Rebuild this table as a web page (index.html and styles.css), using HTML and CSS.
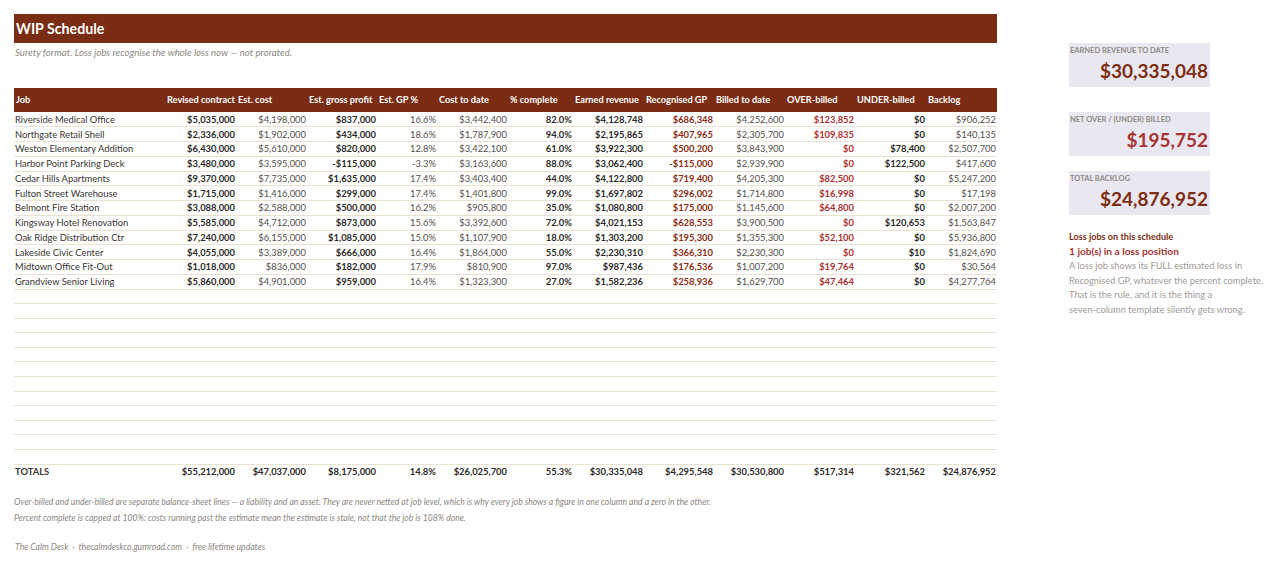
FILE: index.html
```html
<!DOCTYPE html>
<html lang="en">
<head>
<meta charset="utf-8">
<title>WIP Schedule</title>
<link rel="stylesheet" href="styles.css">
</head>
<body>
<div class="page">
  <main class="main">
    <header class="titlebar"><h1>WIP Schedule</h1></header>
    <p class="subtitle">Surety format. Loss jobs recognise the whole loss now — not prorated.</p>

    <table class="wip">
      <colgroup>
        <col class="c-job"><col class="c71"><col class="c71"><col class="c70"><col class="c60"><col class="c71"><col class="c65"><col class="c71"><col class="c70"><col class="c71"><col class="c70"><col class="c71"><col class="c71">
      </colgroup>
      <thead>
        <tr>
          <th>Job</th><th>Revised contract</th><th>Est. cost</th><th>Est. gross profit</th><th>Est. GP %</th><th>Cost to date</th><th>% complete</th><th>Earned revenue</th><th>Recognised GP</th><th>Billed to date</th><th>OVER-billed</th><th>UNDER-billed</th><th>Backlog</th>
        </tr>
      </thead>
      <tbody>
        <tr><td>Riverside Medical Office</td><td class="b">$5,035,000</td><td>$4,198,000</td><td class="b">$837,000</td><td>16.6%</td><td>$3,442,400</td><td class="b">82.0%</td><td class="b">$4,128,748</td><td class="gp">$686,348</td><td>$4,252,600</td><td class="ov">$123,852</td><td class="b">$0</td><td>$906,252</td></tr>
        <tr><td>Northgate Retail Shell</td><td class="b">$2,336,000</td><td>$1,902,000</td><td class="b">$434,000</td><td>18.6%</td><td>$1,787,900</td><td class="b">94.0%</td><td class="b">$2,195,865</td><td class="gp">$407,965</td><td>$2,305,700</td><td class="ov">$109,835</td><td class="b">$0</td><td>$140,135</td></tr>
        <tr><td>Weston Elementary Addition</td><td class="b">$6,430,000</td><td>$5,610,000</td><td class="b">$820,000</td><td>12.8%</td><td>$3,422,100</td><td class="b">61.0%</td><td class="b">$3,922,300</td><td class="gp">$500,200</td><td>$3,843,900</td><td class="ov">$0</td><td class="b">$78,400</td><td>$2,507,700</td></tr>
        <tr><td>Harbor Point Parking Deck</td><td class="b">$3,480,000</td><td>$3,595,000</td><td class="b">-$115,000</td><td>-3.3%</td><td>$3,163,600</td><td class="b">88.0%</td><td class="b">$3,062,400</td><td class="gp">-$115,000</td><td>$2,939,900</td><td class="ov">$0</td><td class="b">$122,500</td><td>$417,600</td></tr>
        <tr><td>Cedar Hills Apartments</td><td class="b">$9,370,000</td><td>$7,735,000</td><td class="b">$1,635,000</td><td>17.4%</td><td>$3,403,400</td><td class="b">44.0%</td><td class="b">$4,122,800</td><td class="gp">$719,400</td><td>$4,205,300</td><td class="ov">$82,500</td><td class="b">$0</td><td>$5,247,200</td></tr>
        <tr><td>Fulton Street Warehouse</td><td class="b">$1,715,000</td><td>$1,416,000</td><td class="b">$299,000</td><td>17.4%</td><td>$1,401,800</td><td class="b">99.0%</td><td class="b">$1,697,802</td><td class="gp">$296,002</td><td>$1,714,800</td><td class="ov">$16,998</td><td class="b">$0</td><td>$17,198</td></tr>
        <tr><td>Belmont Fire Station</td><td class="b">$3,088,000</td><td>$2,588,000</td><td class="b">$500,000</td><td>16.2%</td><td>$905,800</td><td class="b">35.0%</td><td class="b">$1,080,800</td><td class="gp">$175,000</td><td>$1,145,600</td><td class="ov">$64,800</td><td class="b">$0</td><td>$2,007,200</td></tr>
        <tr><td>Kingsway Hotel Renovation</td><td class="b">$5,585,000</td><td>$4,712,000</td><td class="b">$873,000</td><td>15.6%</td><td>$3,392,600</td><td class="b">72.0%</td><td class="b">$4,021,153</td><td class="gp">$628,553</td><td>$3,900,500</td><td class="ov">$0</td><td class="b">$120,653</td><td>$1,563,847</td></tr>
        <tr><td>Oak Ridge Distribution Ctr</td><td class="b">$7,240,000</td><td>$6,155,000</td><td class="b">$1,085,000</td><td>15.0%</td><td>$1,107,900</td><td class="b">18.0%</td><td class="b">$1,303,200</td><td class="gp">$195,300</td><td>$1,355,300</td><td class="ov">$52,100</td><td class="b">$0</td><td>$5,936,800</td></tr>
        <tr><td>Lakeside Civic Center</td><td class="b">$4,055,000</td><td>$3,389,000</td><td class="b">$666,000</td><td>16.4%</td><td>$1,864,000</td><td class="b">55.0%</td><td class="b">$2,230,310</td><td class="gp">$366,310</td><td>$2,230,300</td><td class="ov">$0</td><td class="b">$10</td><td>$1,824,690</td></tr>
        <tr><td>Midtown Office Fit-Out</td><td class="b">$1,018,000</td><td>$836,000</td><td class="b">$182,000</td><td>17.9%</td><td>$810,900</td><td class="b">97.0%</td><td class="b">$987,436</td><td class="gp">$176,536</td><td>$1,007,200</td><td class="ov">$19,764</td><td class="b">$0</td><td>$30,564</td></tr>
        <tr><td>Grandview Senior Living</td><td class="b">$5,860,000</td><td>$4,901,000</td><td class="b">$959,000</td><td>16.4%</td><td>$1,323,300</td><td class="b">27.0%</td><td class="b">$1,582,236</td><td class="gp">$258,936</td><td>$1,629,700</td><td class="ov">$47,464</td><td class="b">$0</td><td>$4,277,764</td></tr>
        <tr class="empty"><td colspan="13"></td></tr>
        <tr class="empty"><td colspan="13"></td></tr>
        <tr class="empty"><td colspan="13"></td></tr>
        <tr class="empty"><td colspan="13"></td></tr>
        <tr class="empty"><td colspan="13"></td></tr>
        <tr class="empty"><td colspan="13"></td></tr>
        <tr class="empty"><td colspan="13"></td></tr>
        <tr class="empty"><td colspan="13"></td></tr>
        <tr class="empty"><td colspan="13"></td></tr>
        <tr class="empty"><td colspan="13"></td></tr>
        <tr class="empty"><td colspan="13"></td></tr>
        <tr class="empty"><td colspan="13"></td></tr>
      </tbody>
      <tfoot>
        <tr><td>TOTALS</td><td>$55,212,000</td><td>$47,037,000</td><td>$8,175,000</td><td>14.8%</td><td>$26,025,700</td><td>55.3%</td><td>$30,335,048</td><td>$4,295,548</td><td>$30,530,800</td><td>$517,314</td><td>$321,562</td><td>$24,876,952</td></tr>
      </tfoot>
    </table>

    <div class="notes">
      <p>Over-billed and under-billed are separate balance-sheet lines — a liability and an asset. They are never netted at job level, which is why every job shows a figure in one column and a zero in the other.</p>
      <p>Percent complete is capped at 100%: costs running past the estimate mean the estimate is stale, not that the job is 108% done.</p>
    </div>
    <p class="footer">The Calm Desk &nbsp;·&nbsp; thecalmdeskco.gumroad.com &nbsp;·&nbsp; free lifetime updates</p>
  </main>

  <aside class="side">
    <div class="kpi kpi-1">
      <div class="kpi-label">EARNED REVENUE TO DATE</div>
      <div class="kpi-value">$30,335,048</div>
    </div>
    <div class="kpi kpi-2">
      <div class="kpi-label">NET OVER / (UNDER) BILLED</div>
      <div class="kpi-value red">$195,752</div>
    </div>
    <div class="kpi kpi-3">
      <div class="kpi-label">TOTAL BACKLOG</div>
      <div class="kpi-value">$24,876,952</div>
    </div>
    <div class="loss">
      <div class="loss-title">Loss jobs on this schedule</div>
      <div class="loss-count">1 job(s) in a loss position</div>
      <p class="loss-text">A loss job shows its FULL estimated loss in Recognised GP, whatever the percent complete. That is the rule, and it is the thing a <span class="nowrap">seven-column</span> template silently gets wrong.</p>
    </div>
  </aside>
</div>
</body>
</html>
```

FILE: styles.css
```css
* { box-sizing: border-box; }
html, body { margin: 0; padding: 0; background: #ffffff; }
body {
  font-family: Lato, "Open Sans", "Liberation Sans", sans-serif;
  color: #2d2a28;
}
.page {
  display: flex;
  align-items: flex-start;
  padding: 14px 0 0 14px;
}
.main { width: 983px; }

.titlebar {
  background: #7b2d13;
  height: 29px;
  display: flex;
  align-items: center;
  padding-left: 2px;
}
.titlebar h1 {
  margin: 0;
  color: #ffffff;
  font-size: 14.2px;
  font-weight: 700;
}
.subtitle {
  margin: 3px 0 0 1px;
  font-size: 9.7px;
  font-style: italic;
  color: #8c8782;
  line-height: 12px;
}

.wip {
  margin-top: 30px;
  width: 983px;
  table-layout: fixed;
  border-collapse: collapse;
  font-size: 9.4px;
}
.c-job { width: 151px; }
.c71 { width: 71px; }
.c70 { width: 70px; }
.c65 { width: 65px; }
.c60 { width: 60px; }

.wip th {
  background: #7b2d13;
  color: #ffffff;
  font-weight: 700;
  font-size: 9.2px;
  text-align: left;
  padding: 0 0 1px 2px;
  height: 24px;
  white-space: nowrap;
}
.wip td {
  height: 14.75px;
  padding: 0 1px 0 2px;
  line-height: 13px;
  text-align: right;
  color: #55504c;
  white-space: nowrap;
  border-bottom: 1px solid #ebe1d1;
}
.wip tr.empty td { height: 14.6px; }
.wip tbody td:first-child,
.wip tfoot td:first-child { text-align: left; color: #3a3633; padding-left: 1px; }
.wip td.b { font-weight: 700; color: #2d2a28; }
.wip td.gp { font-weight: 700; color: #8a2d14; }
.wip td.ov { font-weight: 700; color: #ad3030; }
.wip tfoot td {
  font-weight: 700;
  color: #2d2a28;
  border-bottom: none;
}

.notes { margin-top: 15px; }
.notes p {
  margin: 0;
  font-size: 8.6px;
  font-style: italic;
  color: #8c8782;
  line-height: 16px;
}
.footer {
  margin: 15px 0 0 1px;
  font-size: 8.6px;
  font-style: italic;
  color: #8c8782;
  line-height: 12px;
}

.side {
  width: 141px;
  margin-left: 72px;
  padding-top: 29px;
}
.kpi {
  background: #e9e8f0;
  height: 44px;
  padding: 3px 2px 0 1px;
}
.kpi-2 { margin-top: 25px; }
.kpi-3 { margin-top: 15px; }
.kpi-label {
  font-size: 7.5px;
  font-weight: 700;
  color: #8f8a86;
  line-height: 10px;
}
.kpi-value {
  text-align: right;
  font-size: 19px;
  font-weight: 700;
  color: #7e2d14;
  line-height: 22px;
  margin-top: 4px;
}
.kpi-value.red { color: #a83434; }

.loss { margin-top: 14px; }
.loss-title {
  font-size: 9.1px;
  font-weight: 700;
  color: #7e2d14;
  line-height: 15px;
}
.loss-count {
  font-size: 10.2px;
  font-weight: 700;
  color: #a83434;
  line-height: 15px;
}
.loss-text {
  margin: 0;
  font-size: 9.3px;
  color: #a19b96;
  line-height: 14.7px;
  width: 198px;
}
.nowrap { white-space: nowrap; }
```
